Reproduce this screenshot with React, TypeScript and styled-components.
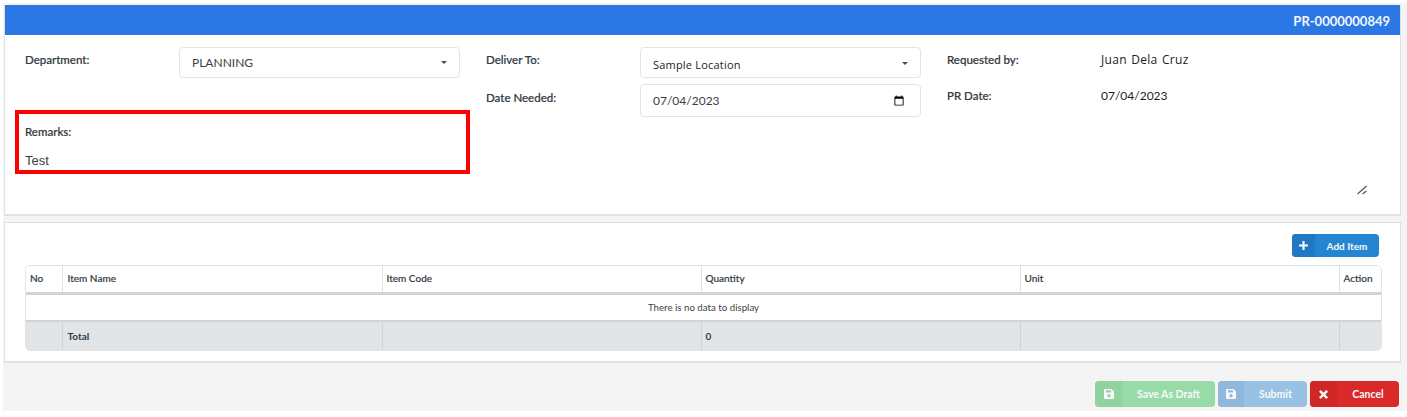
import React from "react";
import styled, { createGlobalStyle } from "styled-components";

const Global = createGlobalStyle`
  html, body { margin: 0; padding: 0; background: #ffffff; }
  body { font-family: Lato, "Liberation Sans", sans-serif; color: #333a42; }
  * { box-sizing: border-box; }
`;

const Page = styled.div`
  width: 1404px;
  height: 408px;
  margin: 3px 0 0 3px;
  background: #f4f4f4;
  padding: 2px 6px 0 1px;
  display: flex;
  flex-direction: column;
`;

const Card = styled.section`
  background: #ffffff;
  border: 1px solid #e0e1e2;
  border-top: 0;
  border-bottom-width: 2px;
  display: flex;
  flex-direction: column;
`;

const HeaderBar = styled.header`
  height: 30px;
  background: #2b78e4;
  color: #f2f6fd;
  font-size: 13px;
  font-weight: 700;
  display: flex;
  align-items: center;
  justify-content: flex-end;
  padding: 2px 10px 0 0;
`;

const FormBody = styled.div`
  position: relative;
  height: 179px;
  display: grid;
  grid-template-columns: 461px 461px 1fr;
  padding: 12px 0 0 20px;
`;

const Column = styled.div`
  display: flex;
  flex-direction: column;
`;

const Row = styled.div<{ $h: number; $mb?: number }>`
  display: flex;
  height: ${(p) => p.$h}px;
  margin-bottom: ${(p) => p.$mb ?? 0}px;
`;

const Label = styled.label<{ $top: number }>`
  width: 154px;
  flex: none;
  padding-top: ${(p) => p.$top}px;
  font-size: 11.5px;
  line-height: 14px;
  font-weight: 500;
  color: #333a42;
  -webkit-text-stroke: 0.2px #333a42;
`;

const Dropdown = styled.div<{ $alt?: boolean }>`
  width: 281px;
  height: 31px;
  border: 1px solid #e3e4e6;
  border-radius: 4px;
  background: #fff;
  display: flex;
  align-items: center;
  justify-content: space-between;
  padding: ${(p) => (p.$alt ? "3px" : "0")} 12px 0 12px;
  font-family: ${(p) => (p.$alt ? '"Open Sans", sans-serif' : "Lato, sans-serif")};
  font-size: ${(p) => (p.$alt ? "11px" : "12px")};
  letter-spacing: ${(p) => (p.$alt ? "0.2px" : "0")};
  color: ${(p) => (p.$alt ? "#1c1c1c" : "#3a3f45")};
`;

const Caret = styled.span`
  width: 0;
  height: 0;
  border-left: 3.5px solid transparent;
  border-right: 3.5px solid transparent;
  border-top: 3.5px solid #4a4d52;
  margin-top: -1px;
`;

const DateInput = styled.input`
  width: 281px;
  height: 33px;
  border: 1px solid #e3e4e6;
  border-radius: 4px;
  background: #fff;
  padding: 0 13px 0 12px;
  font-family: Lato, sans-serif;
  font-size: 12px;
  color: #3a3f45;
  outline: none;

  &::-webkit-datetime-edit-fields-wrapper,
  &::-webkit-datetime-edit-text,
  &::-webkit-datetime-edit-month-field,
  &::-webkit-datetime-edit-day-field,
  &::-webkit-datetime-edit-year-field {
    padding: 0;
  }
`;

const Value = styled.div<{ $top: number; $open?: boolean }>`
  padding-top: ${(p) => p.$top}px;
  font-family: ${(p) => (p.$open ? '"Open Sans", sans-serif' : "Lato, sans-serif")};
  font-size: 12px;
  line-height: 14px;
  letter-spacing: ${(p) => (p.$open ? "0.3px" : "0")};
  color: #1c1c1c;
  word-spacing: ${(p) => (p.$open ? "1px" : "0")};
`;

const RemarksBox = styled.div`
  width: 455px;
  height: 64px;
  margin: 32px 0 0 -10px;
  border: 4px solid #ff0000;
  padding: 11px 0 0 6px;
  display: flex;
  flex-direction: column;
`;

const RemarksLabel = styled.div`
  font-size: 11.5px;
  line-height: 14px;
  font-weight: 500;
  color: #333a42;
  -webkit-text-stroke: 0.2px #333a42;
`;

const RemarksText = styled.div`
  margin-top: 15px;
  font-family: "Liberation Sans", sans-serif;
  font-size: 13px;
  line-height: 14px;
  color: #3a3f45;
`;

const Grip = styled.svg`
  position: absolute;
  right: 32px;
  bottom: 18px;
`;

const ItemsCard = styled(Card)`
  margin-top: 6px;
  height: 141px;
  border-top: 1px solid #e0e1e2;
  padding: 11px 18px 0 20px;
  align-items: stretch;
`;

const Toolbar = styled.div`
  display: flex;
  justify-content: flex-end;
  padding-right: 3px;
  height: 31px;
`;

const IconButton = styled.button<{ $bg: string; $icon: string; $w: number; $h: number; $iconW: number; $size?: number }>`
  width: ${(p) => p.$w}px;
  height: ${(p) => p.$h}px;
  flex: none;
  border: 0;
  padding: 0;
  border-radius: 4px;
  overflow: hidden;
  display: flex;
  align-items: stretch;
  background: ${(p) => p.$bg};
  color: #f6f9fb;
  font-family: Lato, sans-serif;
  font-size: ${(p) => p.$size ?? 10.5}px;
  font-weight: 700;

  & > i {
    width: ${(p) => p.$iconW}px;
    flex: none;
    background: ${(p) => p.$icon};
    display: flex;
    align-items: center;
    justify-content: center;
  }
  & > span {
    flex: 1;
    display: flex;
    align-items: center;
    justify-content: center;
  }
`;

const TableWrap = styled.div`
  border: 1px solid #e2e4e6;
  border-radius: 5px;
  overflow: hidden;
  height: 86px;
`;

const Table = styled.table`
  width: 100%;
  height: 100%;
  border-collapse: collapse;
  table-layout: fixed;
  font-size: 10px;
  color: #333a42;
`;

const Th = styled.th`
  height: 27px;
  text-align: left;
  font-weight: 500;
  padding: 0 4px 1px;
  background: #fff;
  border-right: 1px solid #dfe2e5;
  border-bottom: 3px solid #cfd4da;
  -webkit-text-stroke: 0.15px #333a42;
  &:nth-child(2) { padding-left: 5px; }
  &:last-child { border-right: 0; }
`;

const EmptyCell = styled.td`
  height: 28px;
  text-align: center;
  color: #3a3f45;
  font-size: 9.7px;
  border-bottom: 2px solid #cfd4da;
`;

const FootCell = styled.td`
  background: #e2e5e8;
  padding: 0 4px;
  font-weight: 700;
  border-right: 1px solid #cfd4da;
  &:nth-child(2) { padding-left: 5px; }
  &:last-child { border-right: 0; }
`;

const Actions = styled.div`
  display: flex;
  justify-content: flex-end;
  gap: 3px;
  margin-top: 18px;
  padding-right: 2px;
`;

const SaveIcon = () => (
  <svg width="10" height="10" viewBox="0 0 10 10" fill="currentColor">
    <path fillRule="evenodd" d="M1 0h6.5L10 2.5V9a1 1 0 0 1-1 1H1a1 1 0 0 1-1-1V1a1 1 0 0 1 1-1Zm1 1.2v2.4h5V1.2H2Zm3 3.9a1.7 1.7 0 1 0 0 3.4 1.7 1.7 0 0 0 0-3.4Z" />
  </svg>
);
const PlusIcon = () => (
  <svg width="9" height="9" viewBox="0 0 9 9" fill="currentColor">
    <path d="M3.4 0h2.2v3.4H9v2.2H5.6V9H3.4V5.6H0V3.4h3.4Z" />
  </svg>
);
const CrossIcon = () => (
  <svg width="9" height="9" viewBox="0 0 9 9" fill="currentColor">
    <path d="M1.7 0 4.5 2.8 7.3 0 9 1.7 6.2 4.5 9 7.3 7.3 9 4.5 6.2 1.7 9 0 7.3 2.8 4.5 0 1.7Z" />
  </svg>
);

const cols = [36, 320, 319, 319, 319, 42];

export default function App() {
  return (
    <>
      <Global />
      <Page>
        <Card>
          <HeaderBar>PR-0000000849</HeaderBar>
          <FormBody>
            <Column>
              <Row $h={31}>
                <Label $top={6}>Department:</Label>
                <Dropdown>PLANNING<Caret /></Dropdown>
              </Row>
              <RemarksBox>
                <RemarksLabel>Remarks:</RemarksLabel>
                <RemarksText>Test</RemarksText>
              </RemarksBox>
            </Column>
            <Column>
              <Row $h={31} $mb={6}>
                <Label $top={6}>Deliver To:</Label>
                <Dropdown $alt>Sample Location<Caret /></Dropdown>
              </Row>
              <Row $h={33}>
                <Label $top={7}>Date Needed:</Label>
                <DateInput type="date" defaultValue="2023-07-04" />
              </Row>
            </Column>
            <Column>
              <Row $h={31} $mb={6}>
                <Label $top={6}>Requested by:</Label>
                <Value $top={6} $open>Juan Dela Cruz</Value>
              </Row>
              <Row $h={33}>
                <Label $top={5}>PR Date:</Label>
                <Value $top={5}>07/04/2023</Value>
              </Row>
            </Column>
            <Grip width="12" height="12" viewBox="0 0 12 12" fill="none" stroke="#555" strokeWidth="1.2">
              <path d="M1.5 10 10.5 2M6.5 10l4-3" />
            </Grip>
          </FormBody>
        </Card>
        <ItemsCard>
          <Toolbar>
            <IconButton $bg="#2585d0" $icon="#1f78c1" $w={87} $h={23} $iconW={23} $size={10}>
              <i><PlusIcon /></i>
              <span>Add Item</span>
            </IconButton>
          </Toolbar>
          <TableWrap>
            <Table>
              <colgroup>
                {cols.map((w, i) => <col key={i} style={{ width: w }} />)}
              </colgroup>
              <thead>
                <tr>
                  <Th>No</Th><Th>Item Name</Th><Th>Item Code</Th><Th>Quantity</Th><Th>Unit</Th><Th>Action</Th>
                </tr>
              </thead>
              <tbody>
                <tr><EmptyCell colSpan={6}>There is no data to display</EmptyCell></tr>
                <tr>
                  <FootCell /><FootCell>Total</FootCell><FootCell /><FootCell>0</FootCell><FootCell /><FootCell />
                </tr>
              </tbody>
            </Table>
          </TableWrap>
        </ItemsCard>
        <Actions>
          <IconButton $bg="#98dba8" $icon="#90d2a0" $w={120} $h={26} $iconW={27}>
            <i><SaveIcon /></i>
            <span>Save As Draft</span>
          </IconButton>
          <IconButton $bg="#98c1e3" $icon="#90b8da" $w={89} $h={26} $iconW={26}>
            <i><SaveIcon /></i>
            <span>Submit</span>
          </IconButton>
          <IconButton $bg="#db2828" $icon="#cf2626" $w={89} $h={26} $iconW={27}>
            <i><CrossIcon /></i>
            <span>Cancel</span>
          </IconButton>
        </Actions>
      </Page>
    </>
  );
}
